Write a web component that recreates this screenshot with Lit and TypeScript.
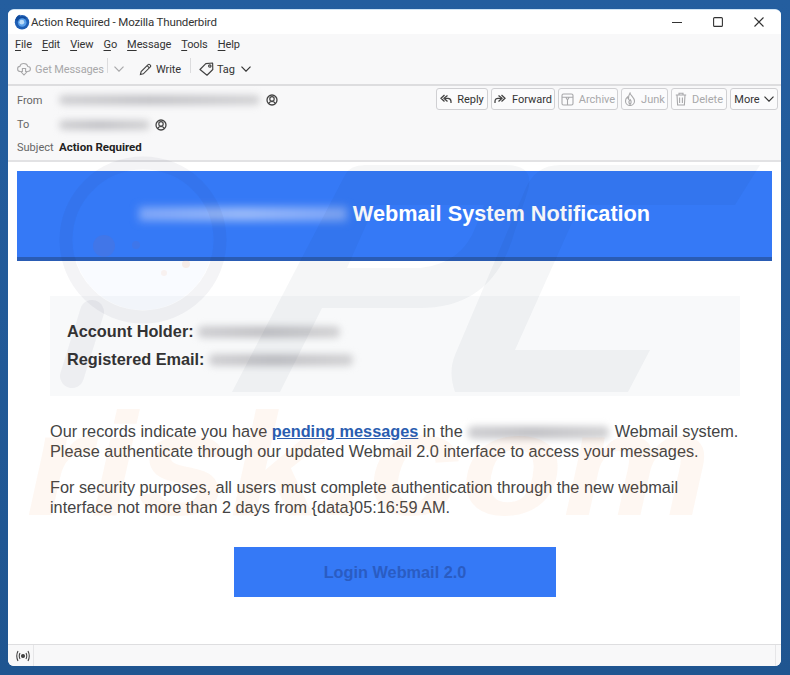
import { LitElement, html, css, svg } from "lit";
import { customElement } from "lit/decorators.js";

const chevron = html`<svg class="chev" viewBox="0 0 10 6" width="10" height="6"><path d="M.5.7 5 5.2 9.5.7" fill="none" stroke="currentColor" stroke-width="1.2"/></svg>`;
const person = html`<svg class="person" viewBox="0 0 12 12" width="12" height="12"><circle cx="6" cy="6" r="5" fill="none" stroke="#444" stroke-width="1.3"/><circle cx="6" cy="4.9" r="2.2" fill="none" stroke="#444" stroke-width="1.2"/><path d="M2.6 9.6c.7-1.6 2-2.1 3.4-2.1s2.7.5 3.4 2.1" fill="none" stroke="#444" stroke-width="1.2"/></svg>`;

const watermark = svg`
  <g fill="none" stroke="#1e2a50" stroke-opacity=".05">
    <circle cx="143" cy="240" r="77" stroke-width="13"/>
    <path d="M92 312 72 376" stroke-width="24" stroke-linecap="round"/>
  </g>
  <circle cx="143" cy="240" r="70" fill="#3b7bf0" fill-opacity=".03"/>
  <circle cx="104" cy="246" r="11" fill="#e0503a" fill-opacity=".07"/>
  <circle cx="136" cy="245" r="4" fill="#e0503a" fill-opacity=".06"/>
  <circle cx="186" cy="264" r="4" fill="#f08040" fill-opacity=".12"/>
  <circle cx="164" cy="273" r="3" fill="#f08040" fill-opacity=".08"/>
  <g fill="#1e2a50" fill-opacity=".045" fill-rule="evenodd">
    <path d="M232 392 345 175Q350 165 365 165H505Q535 165 528 190L512 240Q490 308 420 308H322L280 392ZM375 205 347 268H420Q462 264 476 226L484 205Z"/>
    <path d="M455 392Q448 372 455 355L525 190Q535 165 560 165H760L735 205H580L515 350H650L628 392Z"/>
  </g>
  <text x="26" y="515" font-family="Liberation Sans, sans-serif" font-weight="700" font-style="italic" font-size="146" textLength="685" lengthAdjust="spacingAndGlyphs" fill="#f07a20" fill-opacity=".06">risk.com</text>
`;

@customElement("app-root")
export class AppRoot extends LitElement {
  static styles = css`
    :host { display: block; width: 790px; height: 675px; position: relative; overflow: hidden;
      background: linear-gradient(#245e9f, #1f5590); font-family: Roboto, "Noto Sans", sans-serif; white-space: nowrap; }
    .outer { box-sizing: border-box; height: 675px; padding: 9px 9px 9px 8px; }
    .win { height: 657px; display: flex; flex-direction: column; background: #fff; border-radius: 6px; overflow: hidden;
      border-top: 1px solid #cfe4f5; box-sizing: border-box; }
    .title { height: 24px; flex: none; display: flex; align-items: center; padding-left: 6px; background: #fff; font-size: 11.5px; letter-spacing: -.15px; color: #333; }
    .title .logo { margin-right: 1px; }
    .controls { margin-left: auto; display: flex; align-items: center; gap: 31px; padding-right: 17px; }
    .menu { height: 20px; flex: none; display: flex; align-items: center; gap: 10px; padding-left: 7px; background: #f8f8f9; font-size: 11px; letter-spacing: -.1px; color: #333; }
    .menu u { text-underline-offset: 2px; }
    .tools { flex: none; display: flex; align-items: flex-start; background: #f8f8f9; border-bottom: 2px solid #dddddf; font-size: 11px; letter-spacing: -.1px; color: #333; padding: 6px 0 0 9px; box-sizing: border-box; height: 32px; }
    .tool { display: flex; align-items: center; height: 18px; gap: 4px; }
    .tool.dim { color: #a8a8aa; }
    .vsep { width: 1px; height: 15px; margin-top: -2px; background: #dcdcde; }
    .t-get { width: 90px; }
    .t-arrow { margin: 0 15px 0 6px; color: #a8a8aa; }
    .t-write { margin-right: 9px; }
    .t-tag { margin-left: 8px; gap: 3px; }
    .t-tag .chev { margin-left: 3px; }
    .hdr { flex: none; height: 76px; box-sizing: border-box; background: #f8f8f9; border-bottom: 2px solid #e2e2e4; font-size: 11px; color: #666; padding: 2px 3px 0 9px; display: flex; flex-direction: column; }
    .row { display: flex; align-items: center; height: 24px; }
    .row.to { height: 25px; }
    .row.subj { height: 18px; margin-top: 1px; }
    .lab { width: 42px; flex: none; }
    .blur { display: block; height: 10px; border-radius: 5px; filter: blur(3.5px); background: linear-gradient(90deg, #cfcfd2, #c2c2c6 45%, #d2d2d4); }
    .b-from { width: 201px; margin-right: 6px; }
    .b-to { width: 91px; margin-right: 5px; }
    .sub { font-weight: 700; color: #222; font-size: 11.5px; }
    .btns { margin-left: auto; margin-top: -2px; display: flex; gap: 3px; }
    .btn { height: 22px; box-sizing: border-box; border: 1px solid #d0d0d3; border-radius: 3px; background: #fbfbfc; display: flex; align-items: center; justify-content: center; gap: 5px; font-size: 11px; color: #333; }
    .btn.dim { color: #a8a8aa; }
    .w-reply { width: 52px; } .w-fwd { width: 64px; gap: 6px; } .w-arch { width: 60px; } .w-junk { width: 47px; } .w-del { width: 56px; } .w-more { width: 48px; gap: 4px; }
    .mail { flex: 1; min-height: 0; background: #fff; padding: 9px 9px 0; box-sizing: border-box; font-family: "Liberation Sans", Arial, sans-serif; }
    .banner { height: 90px; box-sizing: border-box; background: #3579f6; border-bottom: 4px solid #2a5cb4; display: flex; align-items: center; justify-content: center; gap: 6px; color: #fff; font-size: 21.7px; font-weight: 700; padding-bottom: 1px; }
    .b-ban { width: 208px; height: 14px; background: linear-gradient(90deg, #82a9f8, #9bbbf9 50%, #7ea6f8); filter: blur(4px); }
    .box { margin: 35px 32px 0 33px; height: 100px; box-sizing: border-box; background: #f8f9fa; padding: 25px 17px; color: #333; font-size: 16.3px; font-weight: 700; display: flex; flex-direction: column; gap: 7px; }
    .line { display: flex; align-items: center; height: 21px; gap: 4px; }
    .b-acc { width: 142px; height: 12px; }
    .b-reg { width: 144px; height: 12px; }
    .para { margin: 26px 0 0 33px; color: #444; font-size: 16.3px; line-height: 19.5px; width: 720px; }
    .para + .para { margin-top: 17px; }
    .para a { color: #2a5db0; font-weight: 700; text-decoration: underline; }
    .b-in { display: inline-block; width: 141px; height: 13px; vertical-align: -2px; margin: 0 1px; }
    .cta { width: 322px; height: 50px; margin: 30px 0 0 217px; background: #3579f6; color: #2a5cc2; font-weight: 700; font-size: 16.3px; display: flex; align-items: center; justify-content: center; }
    .status { flex: none; height: 22px; box-sizing: border-box; border-top: 1px solid #dedee0; background: #f8f8f9; display: flex; align-items: center; padding-left: 4px; }
    .cell { width: 21px; height: 100%; display: flex; align-items: center; justify-content: center; border-right: 1px solid #e6e6e8; }
    .grip { margin-left: auto; margin-right: 5px; width: 1px; height: 100%; background: #e6e6e8; }
    .wm { position: absolute; left: 0; top: 0; pointer-events: none; }
  `;

  render() {
    return html`
      <div class="outer"><div class="win">
        <div class="title">
          <svg class="logo" viewBox="0 0 16 16" width="16" height="16">
            <circle cx="8" cy="8.3" r="7.2" fill="#1f5fb5"/>
            <path d="M1.2 6C2 2.5 4.5.8 6.5.8 5.6 1.6 5.3 2.4 5.5 3 7.5 2 10.500 2.300 12.300 3.800L8 8Z" fill="#0f4a9c"/>
            <circle cx="8.200" cy="8.500" r="4.300" fill="#5aa0ea"/>
            <circle cx="7.800" cy="8.200" r="2.400" fill="#bcdcf8"/>
          </svg>
          <span>Action Required - Mozilla Thunderbird</span>
          <div class="controls">
            <svg viewBox="0 0 10 10" width="10" height="10"><path d="M0 5.500H10" stroke="#333" stroke-width="1.100"/></svg>
            <svg viewBox="0 0 10 10" width="10" height="10"><rect x=".6" y=".6" width="8.800" height="8.800" rx="1" fill="none" stroke="#333" stroke-width="1.100"/></svg>
            <svg viewBox="0 0 10 10" width="10" height="10"><path d="M.5.5 9.500 9.500M9.500.5.5 9.500" stroke="#333" stroke-width="1.100"/></svg>
          </div>
        </div>
        <div class="menu">
          <span><u>F</u>ile</span><span><u>E</u>dit</span><span><u>V</u>iew</span><span><u>G</u>o</span><span><u>M</u>essage</span><span><u>T</u>ools</span><span><u>H</u>elp</span>
        </div>
        <div class="tools">
          <div class="tool dim t-get">
            <svg viewBox="0 0 14 14" width="14" height="14" fill="none" stroke="#a8a8aa" stroke-width="1.100"><path d="M3.500 9.500C1.500 9.500.6 8.200.6 6.900c0-1.400 1-2.400 2.300-2.500C3.300 2.600 4.900 1.500 6.800 1.500c2 0 3.600 1.200 4 3 1.500.1 2.600 1.100 2.600 2.500s-1 2.500-2.900 2.500"/><path d="M5.400 6.500h3.200v3h1.600L7 13 3.800 9.500h1.600Z"/></svg>
            <span>Get Messages</span>
          </div>
          <div class="vsep"></div>
          <div class="tool t-arrow">${chevron}</div>
          <div class="tool t-write">
            <svg viewBox="0 0 14 14" width="13" height="13" fill="none" stroke="#444" stroke-width="1.200"><path d="M1.500 12.500 2.300 9.300 9.800 1.800a1.300 1.300 0 0 1 1.900 0l.5.500a1.300 1.300 0 0 1 0 1.900L4.700 11.700Z"/><path d="M8.800 2.900l2.300 2.300"/></svg>
            <span>Write</span>
          </div>
          <div class="vsep"></div>
          <div class="tool t-tag">
            <svg viewBox="0 0 15 14" width="15" height="14" fill="none" stroke="#444" stroke-width="1.200"><path d="M1 7.500 6.800 1.700 13.600 1 13.800 7.500 8 13.200Z" stroke-linejoin="round"/><circle cx="10.800" cy="4" r="1.200"/></svg>
            <span>Tag</span>${chevron}
          </div>
        </div>
        <div class="hdr">
          <div class="row">
            <span class="lab">From</span><span class="blur b-from"></span>${person}
            <div class="btns">
              <div class="btn w-reply"><svg viewBox="0 0 12 11" width="12" height="11" fill="none" stroke="#444" stroke-width="1.300"><path d="M4.500 1 1 4.300 4.500 7.500M7.500 1.500 4 4.300 7.500 7.500"/><path d="M4.500 4.300H8c2 0 3 1.300 3 3.200v1.500"/></svg><span>Reply</span></div>
              <div class="btn w-fwd"><svg viewBox="0 0 12 11" width="12" height="11" fill="none" stroke="#444" stroke-width="1.300"><path d="M7.500 1 11 4.300 7.500 7.500M4.500 1.500 8 4.300 4.500 7.500"/><path d="M7.500 4.300H4c-2 0-3 1.300-3 3.200v1.500"/></svg><span>Forward</span></div>
              <div class="btn dim w-arch"><svg viewBox="0 0 13 13" width="13" height="13" fill="none" stroke="#a8a8aa" stroke-width="1.100"><rect x="1" y="1" width="11" height="11" rx="1.500"/><path d="M1 4.200H12M4.800 4.200 6.500 7 8.200 4.200M6.500 7V12"/></svg><span>Archive</span></div>
              <div class="btn dim w-junk"><svg viewBox="0 0 12 14" width="12" height="14" fill="none" stroke="#a8a8aa" stroke-width="1.100"><path d="M6 1C6.500 3.500 10.500 5.500 10.500 9A4.500 4.500 0 0 1 1.500 9C1.500 7 2.500 5.800 3.500 5 3.700 6 4 6.500 4.500 7 4.500 5 5 2.500 6 1Z"/><path d="M6 7.500C7.500 9 7.500 11 6 12.500 4.700 11 4.700 9 6 7.500Z"/></svg><span>Junk</span></div>
              <div class="btn dim w-del"><svg viewBox="0 0 12 14" width="12" height="14" fill="none" stroke="#a8a8aa" stroke-width="1.100"><path d="M.8 3H11.200M4 3V1.200H8V3M2 3l.6 10H9.400L10 3M4.600 5.500V11M7.400 5.500V11"/></svg><span>Delete</span></div>
              <div class="btn w-more"><span>More</span>${chevron}</div>
            </div>
          </div>
          <div class="row to"><span class="lab">To</span><span class="blur b-to"></span>${person}</div>
          <div class="row subj"><span class="lab">Subject</span><span class="sub">Action Required</span></div>
        </div>
        <div class="mail">
          <div class="banner"><span class="b-ban"></span><span>Webmail System Notification</span></div>
          <div class="box">
            <div class="line"><span>Account Holder:</span><span class="blur b-acc"></span></div>
            <div class="line"><span>Registered Email:</span><span class="blur b-reg"></span></div>
          </div>
          <div class="para">Our records indicate you have <a>pending messages</a> in the <span class="blur b-in"></span> Webmail system.<br>Please authenticate through our updated Webmail 2.0 interface to access your messages.</div>
          <div class="para">For security purposes, all users must complete authentication through the new webmail<br>interface not more than 2 days from {data}05:16:59 AM.</div>
          <div class="cta">Login Webmail 2.0</div>
        </div>
        <div class="status">
          <div class="cell"><svg viewBox="0 0 16 12" width="16" height="12" fill="none" stroke="#444" stroke-width="1.100"><circle cx="8" cy="6" r="1.500" fill="#444"/><path d="M5 3Q3.500 6 5 9M11 3Q12.500 6 11 9M3 1Q.5 6 3 11M13 1Q15.500 6 13 11"/></svg></div>
          <div class="grip"></div>
        </div>
      </div></div>
      <svg class="wm" width="790" height="675" viewBox="0 0 790 675" aria-hidden="true">${watermark}</svg>
    `;
  }
}
